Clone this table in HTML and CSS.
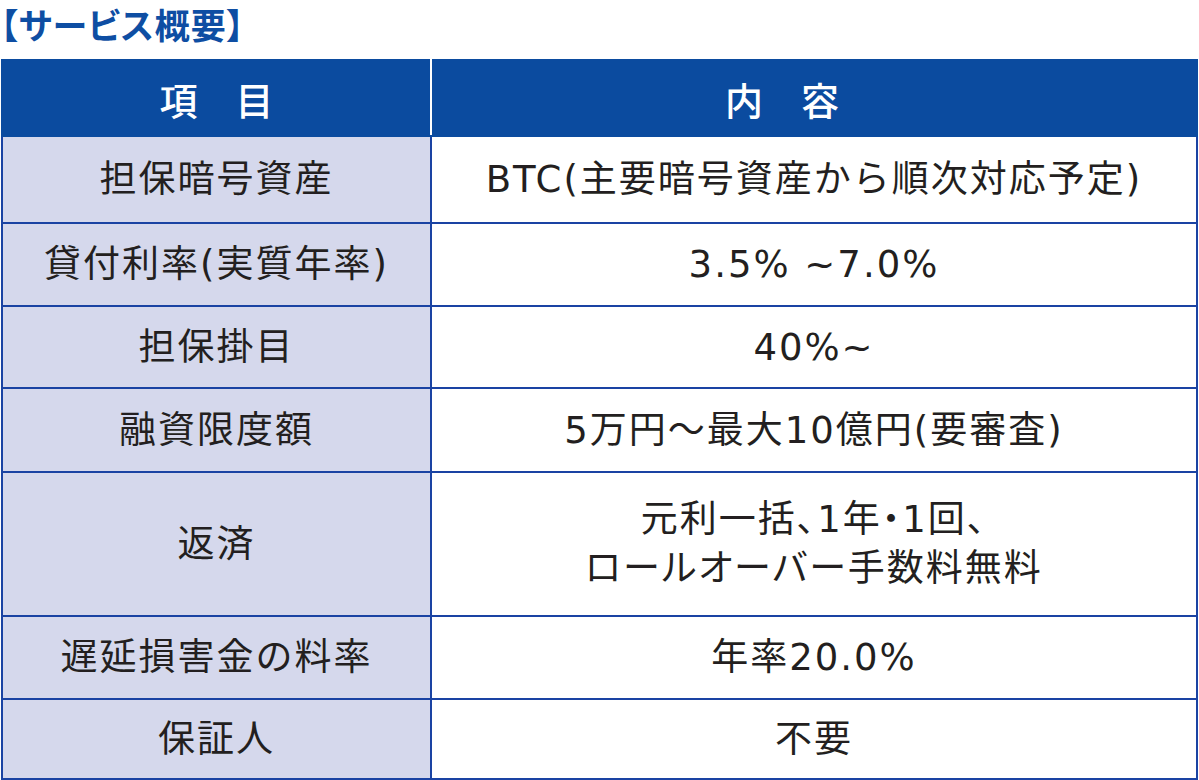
FILE: index.html
```html
<!DOCTYPE html>
<html lang="ja">
<head>
<meta charset="utf-8">
<title>サービス概要</title>
<link rel="stylesheet" href="styles.css">
</head>
<body>
<h2 class="title">【サービス概要】</h2>
<table class="overview">
  <colgroup>
    <col class="c-item">
    <col class="c-body">
  </colgroup>
  <thead>
    <tr class="head-row">
      <th class="col-item">項　目</th>
      <th class="col-body">内　容</th>
    </tr>
  </thead>
  <tbody>
    <tr class="r1"><td class="label">担保暗号資産</td><td class="value">BTC(主要暗号資産から順次対応予定)</td></tr>
    <tr class="r2"><td class="label">貸付利率(実質年率)</td><td class="value">3.5% ~7.0%</td></tr>
    <tr class="r3"><td class="label">担保掛目</td><td class="value">40%~</td></tr>
    <tr class="r4"><td class="label">融資限度額</td><td class="value">5万円～最大10億円(要審査)</td></tr>
    <tr class="r5"><td class="label">返済</td><td class="value tight">元利一括、1年・1回、<br>ロールオーバー手数料無料</td></tr>
    <tr class="r6"><td class="label">遅延損害金の料率</td><td class="value">年率20.0%</td></tr>
    <tr class="r7"><td class="label">保証人</td><td class="value">不要</td></tr>
  </tbody>
</table>
</body>
</html>
```
FILE: styles.css
```css
html, body {
  margin: 0;
  padding: 0;
  background: #ffffff;
}
body {
  font-family: "DejaVu Sans", "Noto Sans CJK JP", sans-serif;
  color: #231f20;
}
.title {
  margin: 0;
  height: 59px;
  padding-top: 1px;
  box-sizing: border-box;
  font-family: "Noto Sans CJK JP", sans-serif;
  font-feature-settings: "palt";
  font-size: 35px;
  font-weight: 700;
  line-height: 46px;
  letter-spacing: 1px;
  color: #0e4ea3;
}
.overview {
  margin-left: 1px;
  width: 1197px;
  border-collapse: collapse;
  table-layout: fixed;
}
.c-item {
  width: 429px;
}
.head-row th {
  height: 74px;
  padding: 0;
  background: #0b4b9f;
  color: #ffffff;
  font-family: "Noto Sans CJK JP", sans-serif;
  font-weight: 500;
  font-size: 38px;
  text-align: center;
  border: 2px solid #0b4b9f;
}
.head-row .col-item {
  border-right: 2px solid #ffffff;
  padding-right: 0;
}
.head-row .col-body {
  padding-right: 64px;
}
.overview td {
  border: 2px solid #1a43a3;
  padding: 0;
  text-align: center;
  vertical-align: middle;
  font-size: 37px;
  letter-spacing: 2px;
  line-height: 49px;
}
.label {
  background: #d5d8ec;
}
.value {
  background: #ffffff;
}
.tight {
  font-feature-settings: "palt";
}
.r1 td { height: 85px; }
.r2 td { height: 81px; }
.r3 td { height: 80px; }
.r4 td { height: 82px; }
.r5 td { height: 142px; }
.r6 td { height: 81px; }
.r7 td { height: 78px; }
```
